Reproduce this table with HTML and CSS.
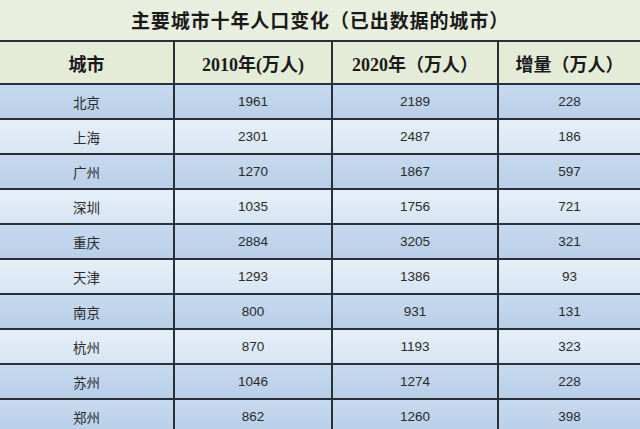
FILE: index.html
```html
<!DOCTYPE html>
<html lang="zh">
<head>
<meta charset="utf-8">
<title>主要城市十年人口变化</title>
<link rel="stylesheet" href="styles.css">
</head>
<body>
<div class="page">
  <div class="title">主要城市十年人口变化（已出数据的城市）</div>
  <table class="data">
    <colgroup>
      <col class="c1"><col class="c2"><col class="c3"><col class="c4">
    </colgroup>
    <thead>
      <tr><th>城市</th><th>2010年(万人)</th><th>2020年（万人）</th><th>增量（万人）</th></tr>
    </thead>
    <tbody>
      <tr class="dark"><td>北京</td><td>1961</td><td>2189</td><td>228</td></tr>
      <tr class="light"><td>上海</td><td>2301</td><td>2487</td><td>186</td></tr>
      <tr class="dark"><td>广州</td><td>1270</td><td>1867</td><td>597</td></tr>
      <tr class="light"><td>深圳</td><td>1035</td><td>1756</td><td>721</td></tr>
      <tr class="dark"><td>重庆</td><td>2884</td><td>3205</td><td>321</td></tr>
      <tr class="light"><td>天津</td><td>1293</td><td>1386</td><td>93</td></tr>
      <tr class="dark"><td>南京</td><td>800</td><td>931</td><td>131</td></tr>
      <tr class="light"><td>杭州</td><td>870</td><td>1193</td><td>323</td></tr>
      <tr class="dark"><td>苏州</td><td>1046</td><td>1274</td><td>228</td></tr>
      <tr class="dark"><td>郑州</td><td>862</td><td>1260</td><td>398</td></tr>
    </tbody>
  </table>
</div>
</body>
</html>
```
FILE: styles.css
```css
html, body {
  margin: 0;
  padding: 0;
  background: #e8eedc;
}
.page {
  width: 640px;
  height: 429px;
  overflow: hidden;
  font-family: "Noto Sans CJK SC", "Noto Sans", sans-serif;
  color: #1e1e1e;
}
.title {
  height: 40px;
  line-height: 40px;
  text-align: center;
  font-size: 19px;
  font-weight: 700;
  letter-spacing: 0.9px;
  background: #e9efdf;
  color: #1a1a1a;
}
.data {
  width: 640px;
  border-collapse: collapse;
  table-layout: fixed;
}
.c1 { width: 174px; }
.c2 { width: 158px; }
.c3 { width: 166px; }
.c4 { width: 142px; }
.data th, .data td {
  border: 2px solid #2a3039;
  text-align: center;
  padding: 0;
}
.data tr > :first-child { border-left: none; }
.data tr > :last-child { border-right: none; }
.data th {
  height: 41px;
  font-size: 18px;
  font-weight: 700;
  font-family: "Liberation Serif", "Noto Sans CJK SC", serif;
  background: #e4ecd7;
  color: #1a1a1a;
}
.data td {
  height: 33px;
  font-size: 13.5px;
  font-family: "Liberation Sans", "Noto Sans CJK SC", sans-serif;
  color: #2a2a2a;
}
.dark td {
  background: linear-gradient(#c6d9ee, #b9cfe8);
}
.light td {
  background: linear-gradient(#e6eff8, #d7e5f3);
}
```
